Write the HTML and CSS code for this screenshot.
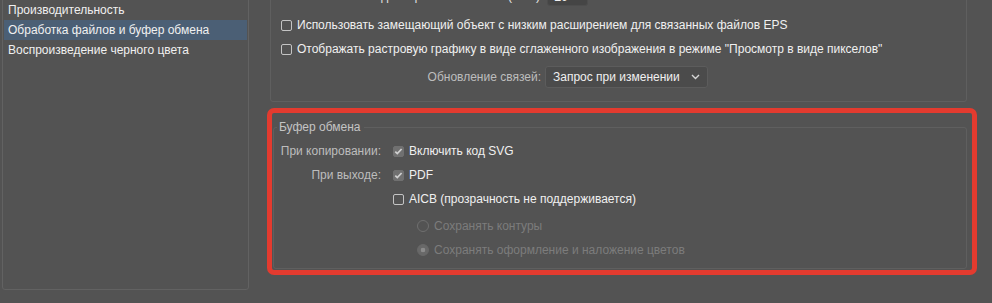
FILE: index.html
```html
<!DOCTYPE html>
<html lang="ru">
<head>
    <meta charset="UTF-8">
    <title>Установки — Обработка файлов и буфер обмена</title>
    <link rel="stylesheet" href="styles.css">
</head>
<body>
    <div class="page">
        <!-- Список разделов -->
        <ul class="sidebar">
            <li>Производительность</li>
            <li class="active">Обработка файлов и буфер обмена</li>
            <li>Воспроизведение черного цвета</li>
        </ul>

        <div class="main">
            <div class="panel">
                <div class="count-row">
                    <span class="label">Количество последних файлов в списке (0-30):</span>
                    <span class="num-input">20</span>
                </div>
                <label class="check-row first">
                    <span class="box"></span>
                    Использовать замещающий объект с низким расширением для связанных файлов EPS
                </label>
                <label class="check-row">
                    <span class="box"></span>
                    Отображать растровую графику в виде сглаженного изображения в режиме "Просмотр в виде пикселов"
                </label>
                <div class="row-grid links">
                    <span class="label">Обновление связей:</span>
                    <span class="select">
                        Запрос при изменении
                        <svg class="chevron" width="9" height="6" viewBox="0 0 9 6"><path d="M1 1l3.5 3.5L8 1" fill="none" stroke="#d6d6d6" stroke-width="1.4"/></svg>
                    </span>
                </div>
            </div>

            <div class="clip-wrap">
                <fieldset class="clipboard">
                    <legend>Буфер обмена</legend>
                    <div class="opt-row">
                        <span class="opt-label">При копировании:</span>
                        <span class="box checked"></span>
                        <span>Включить код SVG</span>
                    </div>
                    <div class="opt-row">
                        <span class="opt-label">При выходе:</span>
                        <span class="box checked"></span>
                        <span>PDF</span>
                    </div>
                    <div class="opt-row">
                        <span class="opt-label"></span>
                        <span class="box"></span>
                        <span>AICB (прозрачность не поддерживается)</span>
                    </div>
                    <div class="opt-row radio-row gap">
                        <span class="radio"></span>
                        <span>Сохранять контуры</span>
                    </div>
                    <div class="opt-row radio-row">
                        <span class="radio on"></span>
                        <span>Сохранять оформление и наложение цветов</span>
                    </div>
                </fieldset>
                <div class="highlight"></div>
            </div>
        </div>
    </div>
</body>
</html>
```

FILE: styles.css
```css
body {
    margin: 0;
    background: #535353;
    color: #f0f0f0;
    font-family: "Liberation Sans", Arial, sans-serif;
    font-size: 12px;
    overflow: hidden;
}

.page {
    display: flex;
    align-items: flex-start;
    margin-top: -30px;
}

/* Левая колонка */
.sidebar {
    list-style: none;
    margin: 0 0 0 2px;
    padding: 29px 1px 0 1px;
    width: 247px;
    height: 320px;
    box-sizing: border-box;
    border: 1px solid #626262;
    border-radius: 3px;
}

.sidebar li {
    height: 20px;
    line-height: 20px;
    padding-left: 4px;
    white-space: nowrap;
}

.sidebar li.active {
    background: #4b5f75;
}

.main {
    margin-left: 21px;
    width: 697px;
    display: flex;
    flex-direction: column;
}

/* Верхний блок */
.panel {
    margin-top: 5px;
    border: 1px solid #5f5f5f;
    border-radius: 3px;
    padding: 8px 10px 12px 10px;
    height: 127px;
    box-sizing: border-box;
}

.count-row {
    display: flex;
    align-items: center;
    height: 24px;
    white-space: nowrap;
}

.count-row .label {
    color: #e6e6e6;
}

.row-grid {
    display: grid;
    grid-template-columns: 260px auto;
    column-gap: 4px;
    align-items: center;
    height: 24px;
}

.row-grid .label {
    justify-self: end;
    white-space: nowrap;
    color: #bdbdbd;
}

.num-input {
    margin-left: 4px;
    width: 41px;
    height: 20px;
    line-height: 20px;
    padding-left: 6px;
    box-sizing: border-box;
    background: #454545;
    border: 1px solid #4d4d4d;
    border-radius: 3px;
    font-weight: bold;
}

.check-row {
    display: flex;
    align-items: center;
    height: 24px;
    white-space: nowrap;
}

.check-row.first {
    margin-top: 5px;
}

.links {
    margin-top: 5px;
    height: 22px;
}

.select {
    position: relative;
    display: block;
    width: 163px;
    height: 22px;
    line-height: 20px;
    padding-left: 7px;
    box-sizing: border-box;
    background: #4b4b4b;
    border: 1px solid #5c5c5c;
    border-radius: 3px;
}

.chevron {
    position: absolute;
    right: 7px;
    top: 7px;
}

.box {
    width: 11px;
    height: 11px;
    box-sizing: border-box;
    border: 1px solid #c4c4c4;
    border-radius: 2px;
    margin-right: 5px;
    flex: none;
}

.box.checked {
    border-color: #707070;
    background: #707070 url("data:image/svg+xml;utf8,<svg xmlns='http://www.w3.org/2000/svg' width='11' height='11'><path d='M2.3 5.6l2 2 4.3-4.6' fill='none' stroke='%23d0d0d0' stroke-width='1.7'/></svg>") center / 11px 11px no-repeat;
}

/* Буфер обмена */
.clip-wrap {
    position: relative;
    margin: 18px 0 0 3px;
}

.clipboard {
    margin: 0;
    padding: 5px 0 6px 0;
    border: 1px solid #5f5f5f;
    border-radius: 3px;
}

.clipboard legend {
    margin-left: 3px;
    padding: 0 3px 0 2px;
    color: #c4c4c4;
}

.opt-row {
    display: flex;
    align-items: center;
    height: 24px;
    white-space: nowrap;
}

.opt-label {
    width: 107px;
    text-align: right;
    margin-right: 12px;
    color: #bdbdbd;
}

.radio-row {
    padding-left: 143px;
    color: #7c7c7c;
}

.radio-row.gap {
    margin-top: 3px;
}

.radio {
    width: 12px;
    height: 12px;
    box-sizing: border-box;
    border: 1px solid #6f6f6f;
    border-radius: 50%;
    margin-right: 5px;
}

.radio.on {
    border-color: #686868;
    background: radial-gradient(circle, #8c8c8c 0 2px, #686868 2.6px);
}

/* Красная рамка-выделение */
.highlight {
    position: absolute;
    left: -6px;
    top: -12px;
    right: -10px;
    bottom: -6px;
    border: 5px solid #e33b2f;
    border-radius: 7px;
}
```
